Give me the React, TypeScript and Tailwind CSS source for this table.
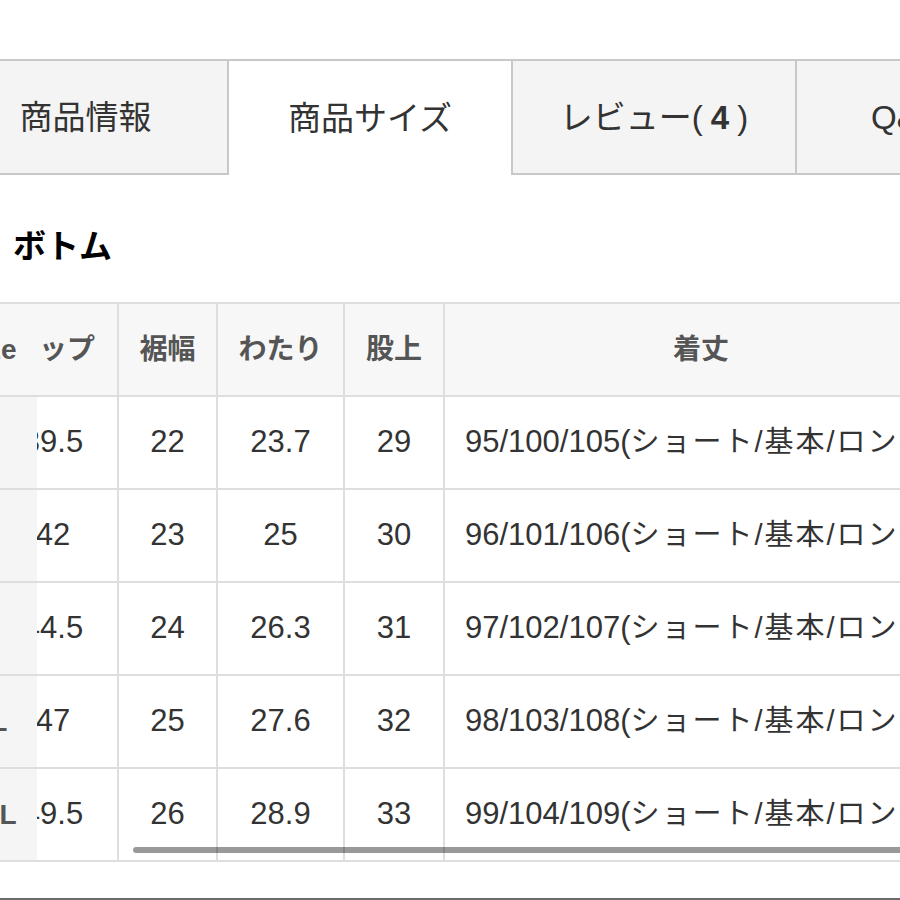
import React from "react";

type Row = {
  size: string;
  hip: string;
  hem: string;
  thigh: string;
  rise: string;
  length: string;
};

const rows: Row[] = [
  { size: "S", hip: "39.5", hem: "22", thigh: "23.7", rise: "29", length: "95/100/105" },
  { size: "M", hip: "42", hem: "23", thigh: "25", rise: "30", length: "96/101/106" },
  { size: "L", hip: "44.5", hem: "24", thigh: "26.3", rise: "31", length: "97/102/107" },
  { size: "XL", hip: "47", hem: "25", thigh: "27.6", rise: "32", length: "98/103/108" },
  { size: "XXL", hip: "49.5", hem: "26", thigh: "28.9", rise: "33", length: "99/104/109" },
];

const cell = "h-[93px] border-b-2 border-[#dedede] flex items-center justify-center";

export default function App() {
  return (
    <div className="w-[900px] h-[900px] overflow-hidden bg-white text-[#333] font-['Liberation_Sans','Noto_Sans_CJK_JP',sans-serif]">
      {/* Tabs */}
      <div className="-ml-[56px] pt-[59px]">
        <nav className="flex h-[116px] border-t-2 border-[#c8c8c8] text-[33px] leading-none">
          <div className="w-[285px] shrink-0 bg-[#f4f4f4] border-r-2 border-b-2 border-[#c8c8c8] flex items-center justify-center">
            商品情報
          </div>
          <div className="w-[282px] shrink-0 bg-white flex items-center justify-center">
            商品サイズ
          </div>
          <div className="w-[286px] shrink-0 bg-[#f4f4f4] border-x-2 border-b-2 border-[#c8c8c8] flex items-center justify-center">
            レビュー(<b className="mx-[8px]">4</b>)
          </div>
          <div className="w-[286px] shrink-0 bg-[#f4f4f4] border-b-2 border-[#c8c8c8] flex items-center justify-center pr-[12px]">
            Q&amp;A(<b className="mx-[8px]">0</b>)
          </div>
        </nav>
      </div>

      {/* Heading */}
      <h2 className="mt-[55px] pl-[13px] text-[33px] font-bold leading-none text-black">
        ボトム
      </h2>

      {/* Size table */}
      <div className="mt-[39px] -ml-[56px] flex border-t-2 border-[#dedede]">
        {/* sticky size column */}
        <div className="w-[93px] shrink-0 flex flex-col bg-[#f5f5f5] text-[28px] font-bold text-[#555]">
          <div className={`${cell} bg-[#f7f7f7] pr-[4px]`}>Size</div>
          {rows.map((r) => (
            <div key={r.size} className={`${cell} pr-[2px]`}>
              {r.size}
            </div>
          ))}
        </div>

        {/* scrolled part */}
        <div className="relative flex-1 overflow-hidden">
          <div className="-ml-[48px] grid w-max grid-cols-[130px_99px_127px_100px_512px]">
            {["ヒップ", "裾幅", "わたり", "股上", "着丈"].map((h, i) => (
              <div
                key={h}
                className={`${cell} bg-[#f7f7f7] text-[28px] font-bold text-[#555] ${i < 4 ? "border-r-2" : ""}`}
              >
                {h}
              </div>
            ))}
            {rows.map((r) => (
              <React.Fragment key={r.size}>
                <div className={`${cell} border-r-2 text-[31px]`}>{r.hip}</div>
                <div className={`${cell} border-r-2 text-[31px]`}>{r.hem}</div>
                <div className={`${cell} border-r-2 text-[31px]`}>{r.thigh}</div>
                <div className={`${cell} border-r-2 text-[31px]`}>{r.rise}</div>
                <div className="h-[93px] border-b-2 border-[#dedede] flex items-center pl-[20px] text-[31px] whitespace-nowrap">
                  {r.length}(<span className="text-[29px] tracking-[2px]">ショート/基本/ロング)</span>
                </div>
              </React.Fragment>
            ))}
          </div>
          {/* overlay scrollbar */}
          <div className="absolute bottom-[9px] left-[96px] -right-[40px] h-[6px] rounded-full bg-black/40" />
        </div>
      </div>

      <div className="mt-[36px] h-[2px] bg-[#6b6b6b]" />
    </div>
  );
}
